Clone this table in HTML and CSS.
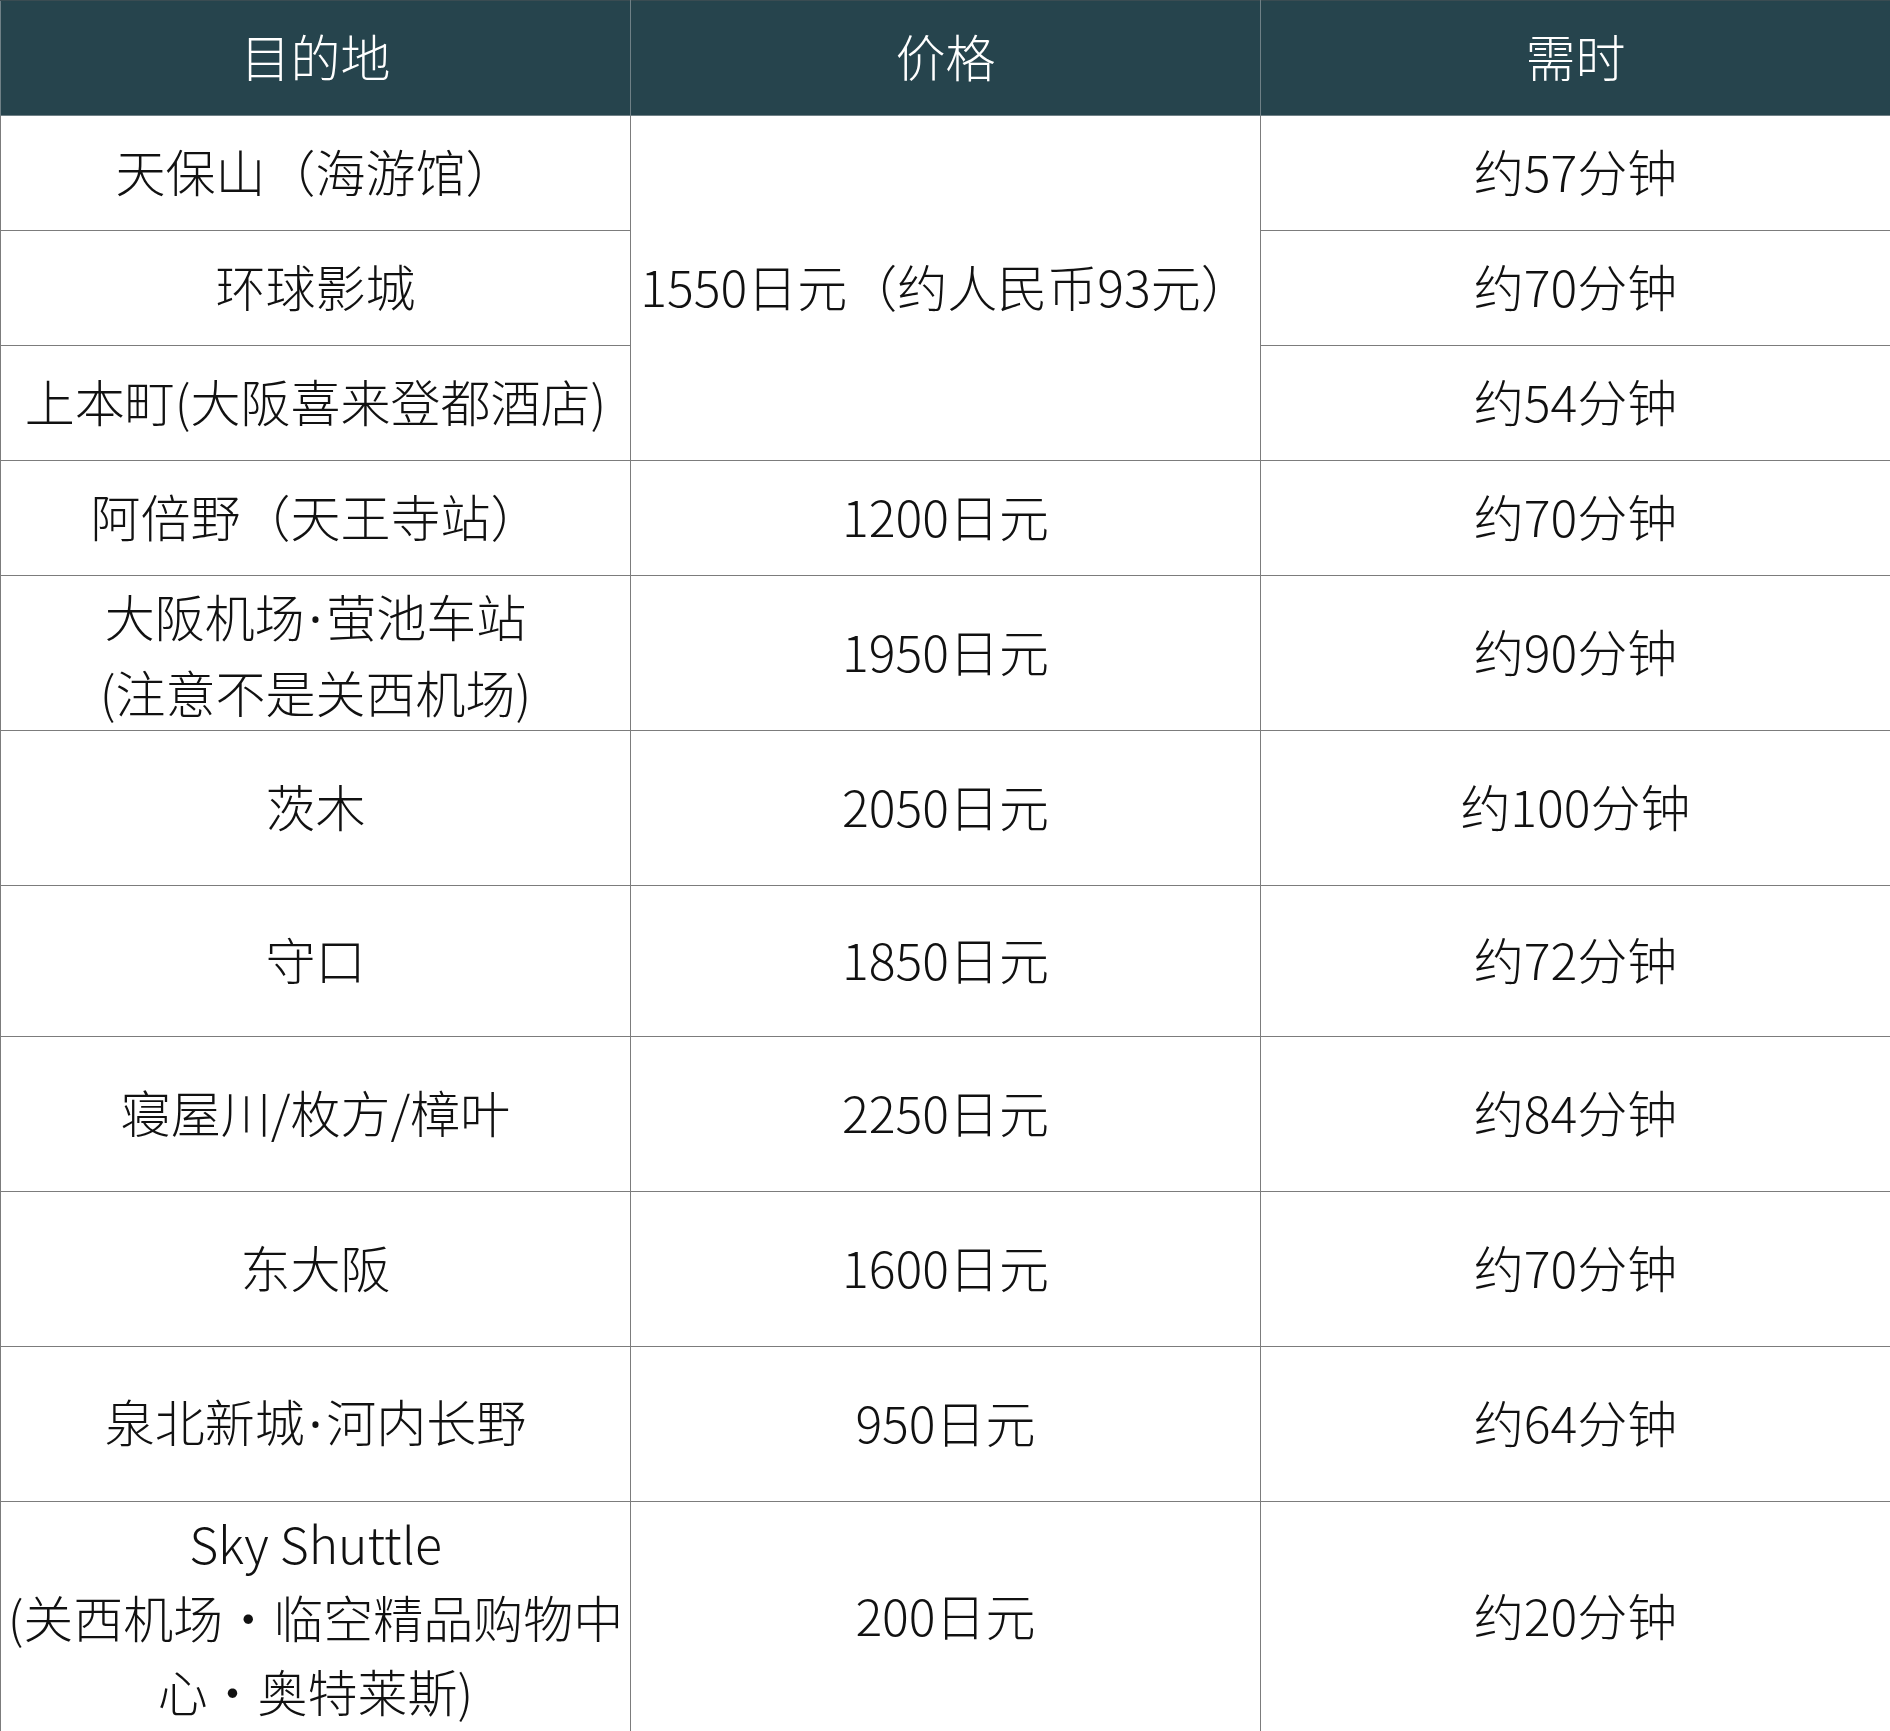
FILE: index.html
```html
<!DOCTYPE html>
<html lang="zh-CN">
<head>
<meta charset="utf-8">
<title>目的地 价格 需时</title>
<link rel="stylesheet" href="styles.css">
</head>
<body>
<table class="fares">
  <colgroup>
    <col class="col">
    <col class="col">
    <col class="col">
  </colgroup>
  <thead>
    <tr class="h115">
      <th>目的地</th>
      <th>价格</th>
      <th>需时</th>
    </tr>
  </thead>
  <tbody>
    <tr class="h115">
      <td>天保山（海游馆）</td>
      <td rowspan="3" class="merged">1550日元（约人民币93元）</td>
      <td>约57分钟</td>
    </tr>
    <tr class="h115">
      <td>环球影城</td>
      <td>约70分钟</td>
    </tr>
    <tr class="h115">
      <td>上本町(大阪喜来登都酒店)</td>
      <td>约54分钟</td>
    </tr>
    <tr class="h115">
      <td>阿倍野（天王寺站）</td>
      <td>1200日元</td>
      <td>约70分钟</td>
    </tr>
    <tr class="h155">
      <td class="two">大阪机场<span class="dot">·</span>萤池车站<br>(注意不是关西机场)</td>
      <td>1950日元</td>
      <td>约90分钟</td>
    </tr>
    <tr class="h155">
      <td>茨木</td>
      <td>2050日元</td>
      <td>约100分钟</td>
    </tr>
    <tr class="h151">
      <td>守口</td>
      <td>1850日元</td>
      <td>约72分钟</td>
    </tr>
    <tr class="h155">
      <td>寝屋川/枚方/樟叶</td>
      <td>2250日元</td>
      <td>约84分钟</td>
    </tr>
    <tr class="h155">
      <td>东大阪</td>
      <td>1600日元</td>
      <td>约70分钟</td>
    </tr>
    <tr class="h155">
      <td>泉北新城<span class="dot">·</span>河内长野</td>
      <td>950日元</td>
      <td>约64分钟</td>
    </tr>
    <tr class="h230">
      <td class="three">Sky Shuttle<br>(关西机场・临空精品购物中<br>心・奥特莱斯)</td>
      <td>200日元</td>
      <td>约20分钟</td>
    </tr>
  </tbody>
</table>
</body>
</html>
```
FILE: styles.css
```css
html, body {
  margin: 0;
  padding: 0;
  background: #ffffff;
}

body {
  font-family: "Noto Sans CJK SC", "Noto Sans", sans-serif;
  font-weight: 300;
  color: #111111;
}

.fares {
  width: 1890px;
  border-collapse: collapse;
  table-layout: fixed;
  border: 1px solid #7c7c7c;
}

.fares .col {
  width: 630px;
}

.fares th,
.fares td {
  border: 1px solid #7c7c7c;
  padding: 0 3px 6px;
  text-align: center;
  vertical-align: middle;
  font-size: 50px;
  line-height: 74px;
  font-weight: 300;
  box-sizing: border-box;
}

.fares th {
  background: #26444d;
  color: #ffffff;
  border-color: #6f8086;
  border-top-color: #3a4c52;
}

.fares .merged {
  padding: 0 8px 6px;
}

.fares .two {
  padding: 0 3px;
  line-height: 73px;
}

.fares .three {
  padding: 0 3px 2px;
}

.fares .dot {
  font-family: "Noto Sans", sans-serif;
  font-weight: 400;
  padding: 0 4px;
}

.h115 { height: 115px; }
.h151 { height: 151px; }
.h155 { height: 155px; }
.h230 { height: 230px; }
```
